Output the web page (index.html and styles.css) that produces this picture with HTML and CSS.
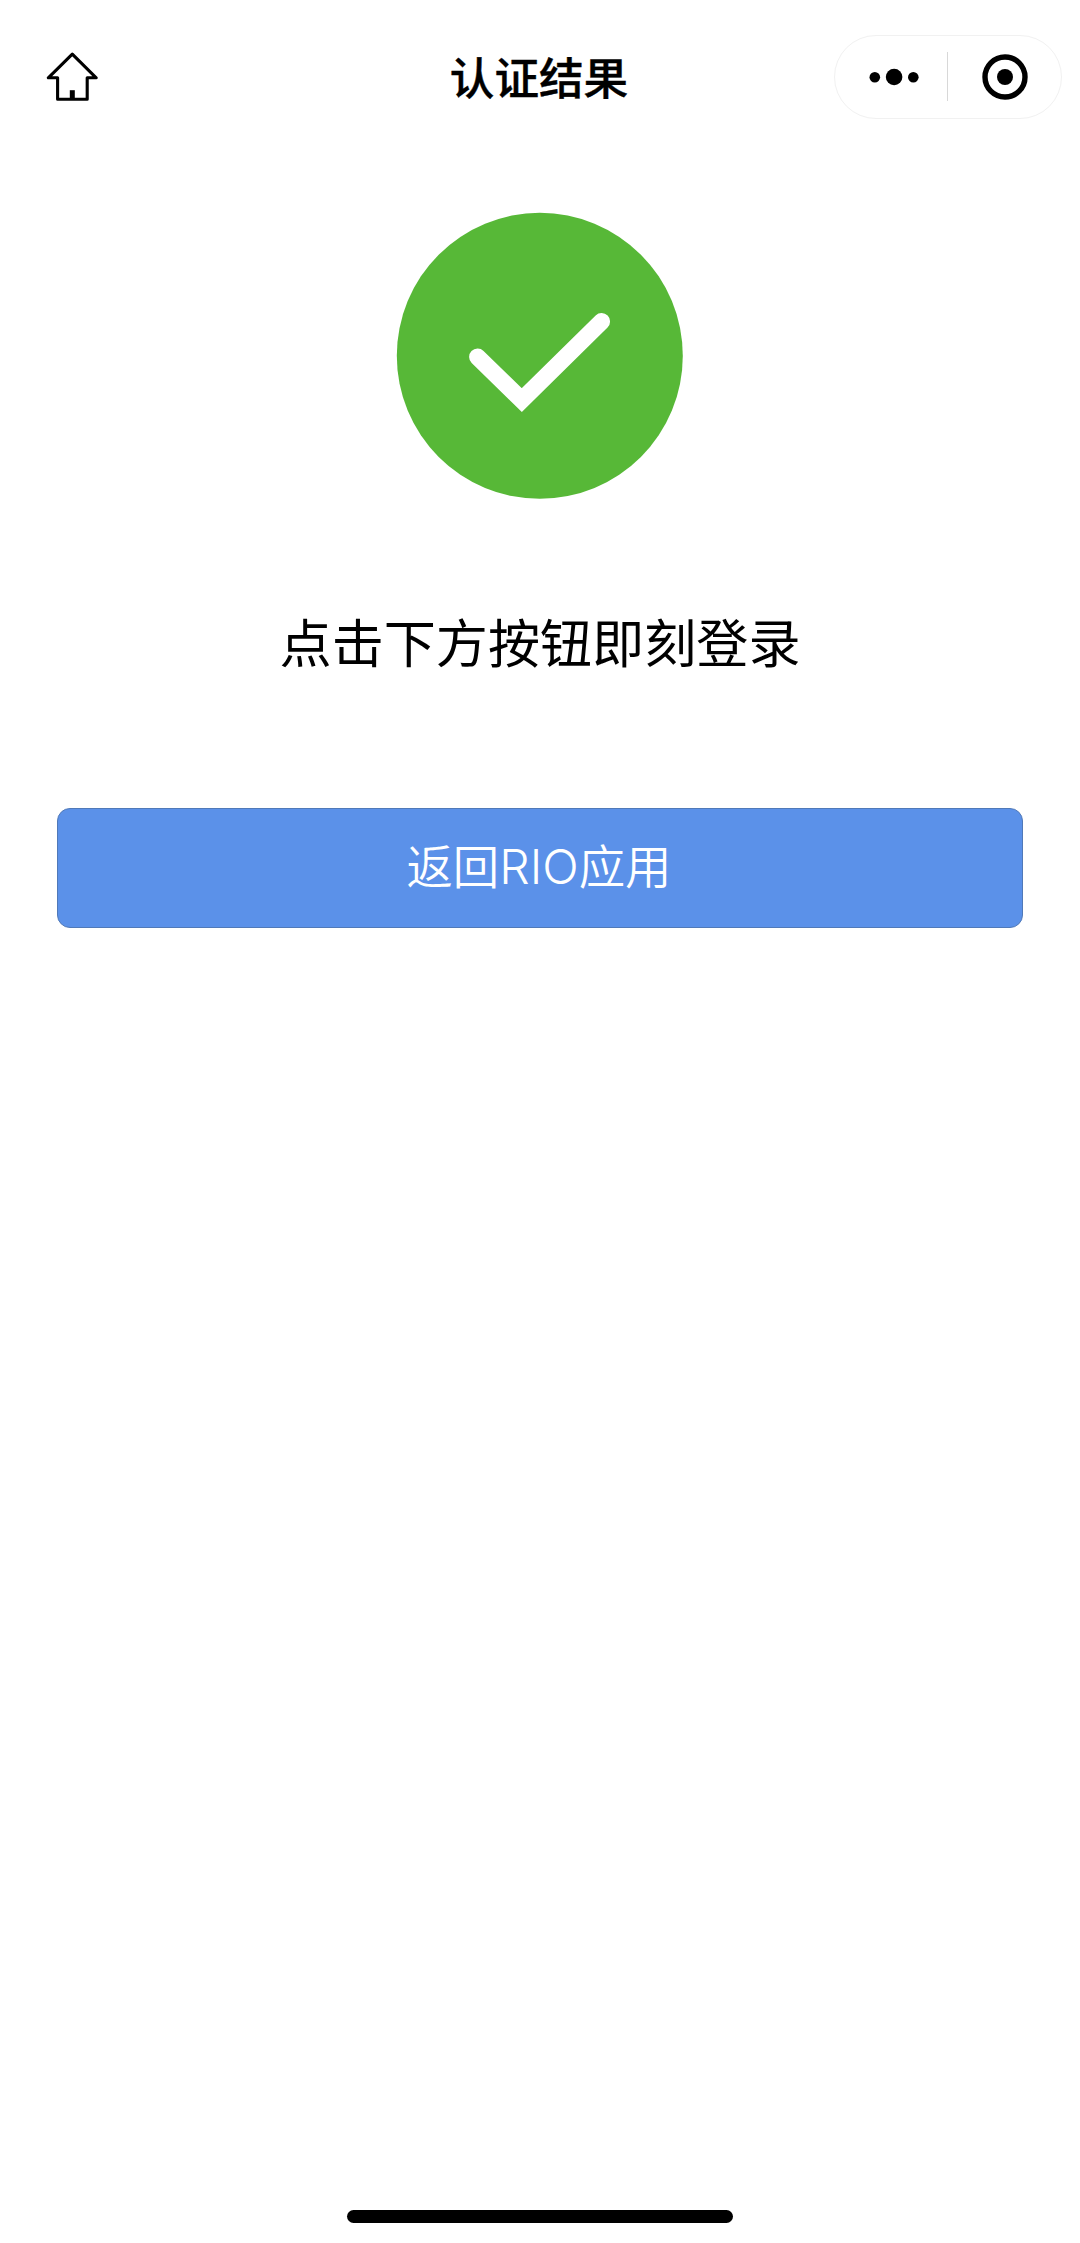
FILE: index.html
```html
<!DOCTYPE html>
<html lang="zh-CN">
<head>
<meta charset="utf-8">
<title>认证结果</title>
<link rel="stylesheet" href="styles.css">
</head>
<body>
<div class="screen">
  <header class="navbar">
    <a class="home" aria-label="首页">
      <svg width="56" height="56" viewBox="0 0 56 56" fill="none" stroke="#000" stroke-width="3.1" stroke-linejoin="round">
        <path d="M28.3 9.1 L4.3 32.8 H13.6 V54.3 H43.2 V32.8 H52.2 Z"/>
        <path d="M28.3 45.2 V54" stroke-width="5"/>
      </svg>
    </a>
    <h1 class="title">认证结果</h1>
    <div class="capsule">
      <svg class="more" width="50" height="20" viewBox="0 0 50 20">
        <circle cx="5.8" cy="10.3" r="5.3"/><circle cx="25.1" cy="10" r="8.3"/><circle cx="44.3" cy="10.3" r="5.3"/>
      </svg>
      <span class="divider"></span>
      <svg class="close" width="46" height="46" viewBox="0 0 46 46">
        <circle cx="23" cy="23" r="20" fill="none" stroke="#000" stroke-width="5.4"/><circle cx="23" cy="23" r="8"/>
      </svg>
    </div>
  </header>
  <main class="result">
    <svg class="success" width="288" height="288" viewBox="0 0 288 288">
      <circle cx="143.8" cy="143.8" r="143" fill="#57b837"/>
      <path d="M81.6 145 L125.8 188 L205.6 109.5" fill="none" stroke="#fff" stroke-width="17" stroke-linecap="round"/>
    </svg>
    <p class="message">点击下方按钮即刻登录</p>
    <button class="return" type="button">返回<span class="latin">RIO</span>应用</button>
  </main>
  <div class="home-indicator"></div>
</div>
</body>
</html>
```
FILE: styles.css
```css
* { box-sizing: border-box; }
body { margin: 0; background: #fff; }
.screen {
  width: 1080px;
  height: 2243px;
  display: flex;
  flex-direction: column;
  align-items: center;
  color: #000;
  font-family: "Liberation Sans", "Noto Sans CJK SC", sans-serif;
}
.navbar {
  width: 100%;
  height: 154px;
  padding: 0 18px 0 44px;
  display: grid;
  grid-template-columns: 1fr auto 1fr;
  align-items: center;
}
.home { display: block; width: 56px; height: 56px; margin-top: -8px; }
.title {
  margin: -3px 0 0 -28px;
  font-size: 44.6px;
  line-height: 60px;
  font-weight: 500;
  -webkit-text-stroke: 0.4px #000;
  font-family: "Noto Sans CJK SC", sans-serif;
}
.capsule {
  justify-self: end;
  width: 228px;
  height: 84px;
  margin-top: -1px;
  border: 1.5px solid #f1f1f1;
  border-radius: 42px;
  display: flex;
  align-items: center;
}
.more { margin-left: 34px; }
.divider { width: 1px; height: 49px; margin-left: 28px; background: #d8d8d8; }
.close { margin-left: 34px; }
.result {
  flex: 1;
  width: 966px;
  display: flex;
  flex-direction: column;
  align-items: center;
  padding-top: 58px;
}
.success { display: block; }
.message {
  margin: 103px 0 0;
  font-size: 52.1px;
  line-height: 76px;
  font-family: "Noto Sans CJK SC", sans-serif;
}
.return {
  width: 966px;
  height: 120px;
  margin: 129px 0 0;
  padding: 0 2px 6px 0;
  border: 1px solid #5079b8;
  border-radius: 13px;
  background: #5b91e9;
  color: #fff;
  font: 350 46.4px/60px "Noto Sans CJK SC", sans-serif;
}
.latin { font-family: Inter, sans-serif; font-weight: 300; font-size: 48px; }
.home-indicator {
  width: 386px;
  height: 13px;
  margin-bottom: 20px;
  border-radius: 7px;
  background: #000;
}
```
